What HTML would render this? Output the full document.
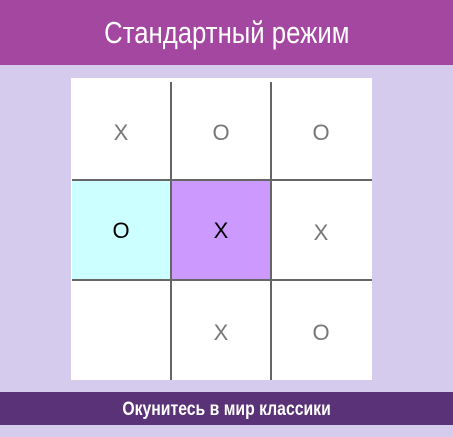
<!DOCTYPE html><html><head><meta charset="utf-8"><style>
body{margin:0;width:453px;height:437px;background:#d5cced;position:relative;overflow:hidden;font-family:"Liberation Sans",sans-serif}
.h{position:absolute;left:0;top:0;width:453px;height:65px;background:#a347a0;color:#fff;font-size:31px;text-align:center;line-height:66px}
.h span,.f span{display:inline-block;transform:scaleX(0.83)}
.f{position:absolute;left:0;top:392px;width:453px;height:33px;background:#5a3277;color:#fff;font-size:19px;font-weight:bold;text-align:center;line-height:36px}
.b{position:absolute;left:71px;top:78px;width:301px;height:302px;background:#fff}
.c{position:absolute;width:100px;height:100px;line-height:104px;text-align:center;font-family:"Liberation Sans",sans-serif;font-size:22px;color:#777}
.v{position:absolute;width:2px;background:#666}
.hz{position:absolute;height:2px;background:#666}
</style></head><body>
<div class="h"><span>Стандартный режим</span></div>
<div class="b">
<div class="c" style="left:1px;top:103px;width:98px;height:98px;line-height:100px;background:#ccffff;color:#000">O</div>
<div class="c" style="left:101px;top:103px;width:98px;height:98px;line-height:100px;background:#cc99ff;color:#000">X</div>
<div class="v" style="left:99px;top:4px;height:298px"></div>
<div class="v" style="left:199px;top:4px;height:298px"></div>
<div class="hz" style="left:1px;top:101px;width:300px"></div>
<div class="hz" style="left:1px;top:201px;width:300px"></div>
<div class="c" style="left:0;top:3px">X</div>
<div class="c" style="left:100px;top:3px">O</div>
<div class="c" style="left:200px;top:3px">O</div>
<div class="c" style="left:200px;top:103px">X</div>
<div class="c" style="left:100px;top:203px">X</div>
<div class="c" style="left:200px;top:203px">O</div>
</div>
<div class="f"><span>Окунитесь в мир классики</span></div>
</body></html>
